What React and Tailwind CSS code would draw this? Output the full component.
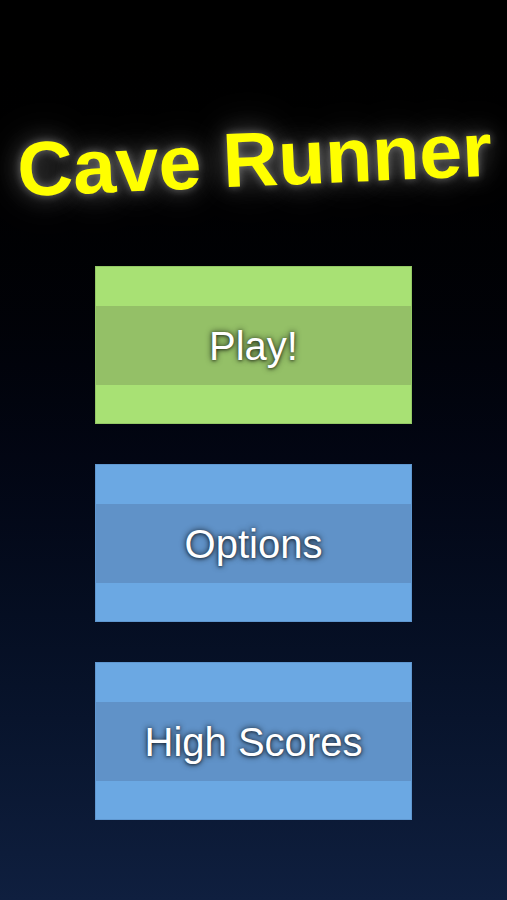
import React from "react";

function MenuButton({ label, light, dark, border }) {
  return (
    <button
      className={`w-[317px] h-[158px] flex flex-col border ${light} ${border}`}
    >
      <div className="h-[39px] w-full" />
      <div
        className={`h-[79px] w-full flex items-center justify-center ${dark}`}
      >
        <span className="text-white text-[40px] leading-none [font-family:'Liberation_Sans',Arial,sans-serif] [text-shadow:0_0_6px_rgba(0,0,0,0.8),0_1px_3px_rgba(0,0,0,0.5)]">
          {label}
        </span>
      </div>
      <div className="flex-1 w-full" />
    </button>
  );
}

export default function App() {
  return (
    <div className="w-[507px] h-[900px] bg-gradient-to-b from-[#000000] to-[#0f1f3f] flex flex-col items-center overflow-hidden">
      <div className="h-[266px] w-full flex items-center justify-center">
        <h1 className="-rotate-[2.5deg] translate-y-[26px] translate-x-[1px] text-[#ffff00] text-[77px] font-bold leading-none whitespace-nowrap [font-family:'Liberation_Sans',Arial,sans-serif] [text-shadow:0_0_8px_rgba(255,255,255,0.35),0_0_24px_rgba(255,255,255,0.3),0_0_48px_rgba(255,255,255,0.2)]">
          Cave Runner
        </h1>
      </div>
      <div className="flex flex-col gap-[40px]">
        <MenuButton
          label="Play!"
          light="bg-[#a8e174]"
          dark="bg-[#94c067]"
          border="border-[#93c865]"
        />
        <MenuButton
          label="Options"
          light="bg-[#6ba8e3]"
          dark="bg-[#6092c8]"
          border="border-[#5f97d0]"
        />
        <MenuButton
          label="High Scores"
          light="bg-[#6ba8e3]"
          dark="bg-[#6092c8]"
          border="border-[#5f97d0]"
        />
      </div>
    </div>
  );
}
